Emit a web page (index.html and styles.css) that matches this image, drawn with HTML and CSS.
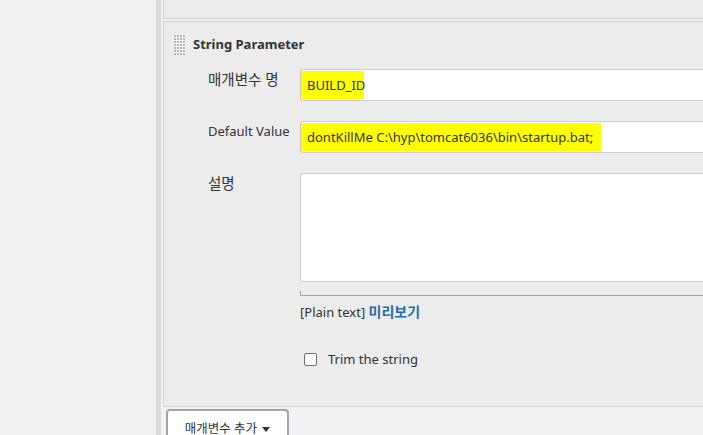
FILE: index.html
```html
<!DOCTYPE html>
<html lang="ko">
<head>
<meta charset="utf-8">
<title>String Parameter</title>
<link rel="stylesheet" href="styles.css">
</head>
<body>
<div class="page">
  <div class="side"></div>
  <div class="gutter"></div>
  <div class="content">
    <div class="panel prev"></div>
    <div class="panel param">
      <div class="head">
        <span class="grip"></span>
        <span class="title">String Parameter</span>
      </div>
      <div class="form">
        <div class="row">
          <div class="label ko">매개변수 명</div>
          <div class="field"><div class="input"><span class="hl hl-short">BUILD_ID</span></div></div>
        </div>
        <div class="row">
          <div class="label">Default Value</div>
          <div class="field"><div class="input"><span class="hl hl-long">dontKillMe C:\hyp\tomcat6036\bin\startup.bat;</span></div></div>
        </div>
        <div class="row">
          <div class="label ko">설명</div>
          <div class="field">
            <div class="textarea"></div>
            <div class="grow"></div>
            <div class="preview"><span class="plain">[Plain text]</span> <a class="link">미리보기</a></div>
          </div>
        </div>
        <div class="row check-row">
          <div class="label"></div>
          <div class="field">
            <label class="check"><input type="checkbox" class="box"><span>Trim the string</span></label>
          </div>
        </div>
      </div>
    </div>
    <div class="actions">
      <button class="add">매개변수 추가 <span class="caret"></span></button>
    </div>
  </div>
</div>
</body>
</html>
```

FILE: styles.css
```css
html, body {
  margin: 0;
  padding: 0;
  overflow: hidden;
  background: #f2f2f2;
}
body {
  font-family: "Noto Sans", "Noto Sans CJK KR", sans-serif;
  font-size: 13px;
  color: #333;
  width: 703px;
  height: 435px;
}
.page {
  display: flex;
  height: 435px;
}
.side {
  width: 156px;
  flex: none;
  background: #f2f2f2;
}
.gutter {
  width: 5px;
  flex: none;
  background: #dcdcdc;
}
.content {
  flex: none;
  width: 700px;
  padding-left: 2px;
  background: #f2f2f2;
}
.panel {
  background: #ececec;
  border: 1px solid #d3d3d3;
  border-right: none;
}
.prev {
  border-top: none;
  height: 18px;
}
.param {
  margin-top: 2px;
  height: 386px;
  box-sizing: border-box;
}
.head {
  display: flex;
  align-items: center;
  padding: 12px 0 0 9px;
  height: 21px;
}
.grip {
  width: 13px;
  height: 21px;
  background-color: #f7f7f7;
  background-image:
    linear-gradient(90deg, #f7f7f7 1px, transparent 1px),
    linear-gradient(#f7f7f7 1px, #b4b4b4 1px);
  background-size: 3px 3px;
}
.title {
  font-weight: bold;
  font-size: 13px;
  margin-left: 7px;
  margin-top: -2px;
  color: #333;
}
.form {
  margin-top: 14px;
  padding-left: 44px;
}
.row {
  display: flex;
  margin-bottom: 20px;
}
.label {
  width: 92px;
  flex: none;
  padding-top: 2px;
  line-height: 17px;
}
.label.ko {
  font-size: 14.5px;
  line-height: 19px;
  padding-top: 1px;
}
.field {
  flex: 1;
}
.input {
  height: 30px;
  border: 1px solid #cccccc;
  border-radius: 3px;
  border-right: none;
  background: #fff;
  display: flex;
}
.hl {
  background: #ffff00;
  display: flex;
  align-items: center;
  margin: 1px 0;
  color: #333;
}
.hl-short {
  padding: 0 1px 0 6px;
  width: 56px;
}
.hl-long {
  padding: 0 8px 0 6px;
}
.textarea {
  height: 107px;
  border: 1px solid #cccccc;
  border-radius: 3px;
  border-right: none;
  background: #fff;
}
.grow {
  margin-top: 9px;
  height: 4px;
  border-left: 1px solid #9aa6af;
  border-bottom: 1px solid #9aa6af;
}
.preview {
  margin-top: 6px;
  line-height: 19px;
}
.plain {
  color: #333;
}
.link {
  color: #1f6fa8;
  font-weight: bold;
  font-size: 14px;
}
.row:nth-child(3) {
  margin-bottom: 0;
}
.check-row {
  margin-top: 28px;
}
.check {
  display: flex;
  align-items: center;
  margin-left: 4px;
}
.box {
  appearance: none;
  -webkit-appearance: none;
  width: 13px;
  height: 13px;
  margin: 0 11px 0 0;
  border: 1px solid #6f6f6f;
  border-radius: 2px;
  background: #fff;
}
.actions {
  padding: 2px 0 0 3px;
}
.add {
  font-family: "Noto Sans", "Noto Sans CJK KR", sans-serif;
  font-size: 12.5px;
  color: #333;
  background: #fff;
  border: 2px solid #9ba6ae;
  border-bottom: none;
  border-radius: 4px 4px 0 0;
  width: 123px;
  height: 30px;
  padding: 4px 0 0 0;
  text-align: center;
}
.caret {
  display: inline-block;
  width: 0;
  height: 0;
  border-left: 4px solid transparent;
  border-right: 4px solid transparent;
  border-top: 5px solid #333;
  vertical-align: middle;
  margin-left: 2px;
}
```
